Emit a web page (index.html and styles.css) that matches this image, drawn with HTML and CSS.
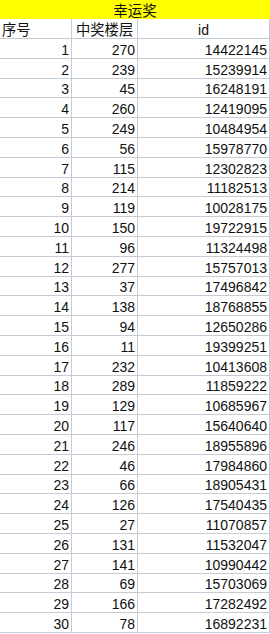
FILE: index.html
```html
<!DOCTYPE html>
<html lang="zh">
<head>
<meta charset="utf-8">
<title>幸运奖</title>
<link rel="stylesheet" href="styles.css">
</head>
<body>
<div class="sheet">
  <div class="title">幸运奖</div>
  <div class="grid">
    <div class="cell head left">序号</div><div class="cell head left">中奖楼层</div><div class="cell head center">id</div>
    <div class="cell">1</div><div class="cell">270</div><div class="cell">14422145</div>
    <div class="cell">2</div><div class="cell">239</div><div class="cell">15239914</div>
    <div class="cell">3</div><div class="cell">45</div><div class="cell">16248191</div>
    <div class="cell">4</div><div class="cell">260</div><div class="cell">12419095</div>
    <div class="cell">5</div><div class="cell">249</div><div class="cell">10484954</div>
    <div class="cell">6</div><div class="cell">56</div><div class="cell">15978770</div>
    <div class="cell">7</div><div class="cell">115</div><div class="cell">12302823</div>
    <div class="cell">8</div><div class="cell">214</div><div class="cell">11182513</div>
    <div class="cell">9</div><div class="cell">119</div><div class="cell">10028175</div>
    <div class="cell">10</div><div class="cell">150</div><div class="cell">19722915</div>
    <div class="cell">11</div><div class="cell">96</div><div class="cell">11324498</div>
    <div class="cell">12</div><div class="cell">277</div><div class="cell">15757013</div>
    <div class="cell">13</div><div class="cell">37</div><div class="cell">17496842</div>
    <div class="cell">14</div><div class="cell">138</div><div class="cell">18768855</div>
    <div class="cell">15</div><div class="cell">94</div><div class="cell">12650286</div>
    <div class="cell">16</div><div class="cell">11</div><div class="cell">19399251</div>
    <div class="cell">17</div><div class="cell">232</div><div class="cell">10413608</div>
    <div class="cell">18</div><div class="cell">289</div><div class="cell">11859222</div>
    <div class="cell">19</div><div class="cell">129</div><div class="cell">10685967</div>
    <div class="cell">20</div><div class="cell">117</div><div class="cell">15640640</div>
    <div class="cell">21</div><div class="cell">246</div><div class="cell">18955896</div>
    <div class="cell">22</div><div class="cell">46</div><div class="cell">17984860</div>
    <div class="cell">23</div><div class="cell">66</div><div class="cell">18905431</div>
    <div class="cell">24</div><div class="cell">126</div><div class="cell">17540435</div>
    <div class="cell">25</div><div class="cell">27</div><div class="cell">11070857</div>
    <div class="cell">26</div><div class="cell">131</div><div class="cell">11532047</div>
    <div class="cell">27</div><div class="cell">141</div><div class="cell">10990442</div>
    <div class="cell">28</div><div class="cell">69</div><div class="cell">15703069</div>
    <div class="cell">29</div><div class="cell">166</div><div class="cell">17282492</div>
    <div class="cell">30</div><div class="cell">78</div><div class="cell">16892231</div>
  </div>
</div>
</body>
</html>
```
FILE: styles.css
```css
html, body {
  margin: 0;
  padding: 0;
  background: #ffffff;
}

.sheet {
  width: 270px;
  font-family: "Liberation Sans", "Noto Sans CJK SC", sans-serif;
  font-size: 14px;
  color: #111111;
}

.title {
  height: 19px;
  background: #ffff00;
  text-align: center;
  line-height: 19px;
  font-size: 14.5px;
  font-family: "Noto Sans CJK SC", sans-serif;
}

.grid {
  display: grid;
  grid-template-columns: 72px 66px 132px;
  grid-template-rows: 20px;
  grid-auto-rows: 19.8px;
}

.cell {
  box-sizing: border-box;
  border-right: 1px solid #c6cbd6;
  border-bottom: 1px solid #c6cbd6;
  display: flex;
  align-items: flex-end;
  justify-content: flex-end;
  padding: 0 2px 0 2px;
  line-height: 16px;
  white-space: nowrap;
}

.head {
  font-family: "Noto Sans CJK SC", sans-serif;
  font-size: 14.3px;
  line-height: 18px;
}

.head.left {
  justify-content: flex-start;
  padding-left: 4px;
}

.grid .head:first-child {
  padding-left: 2px;
}

.head.center {
  justify-content: center;
  font-family: "Liberation Sans", sans-serif;
  font-size: 14px;
  line-height: 16px;
}
```
